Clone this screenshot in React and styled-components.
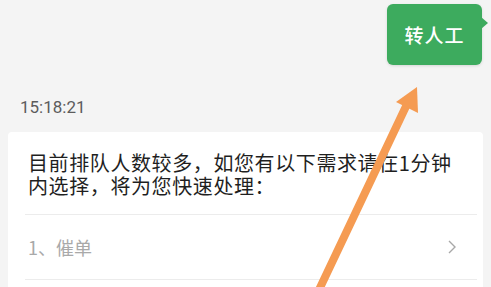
import React from "react";
import styled, { createGlobalStyle } from "styled-components";

const GlobalStyle = createGlobalStyle`
    html, body {
        margin: 0;
        padding: 0;
        background: #f4f4f4;
    }
    * {
        box-sizing: border-box;
    }
`;

const Page = styled.div`
    position: relative;
    width: 491px;
    height: 287px;
    overflow: hidden;
    background: #f4f4f4;
    padding: 4px 8px 0 8px;
    font-family: "Noto Sans CJK SC", "Noto Sans", sans-serif;
`;

const TopBar = styled.div`
    display: flex;
    justify-content: flex-end;
    padding-right: 1px;
`;

const TransferButton = styled.div`
    position: relative;
    width: 95px;
    height: 61px;
    border-radius: 6px;
    background: #3dab5e;
    color: #ffffff;
    font-size: 19px;
    font-weight: 500;
    letter-spacing: 1px;
    display: flex;
    align-items: center;
    justify-content: center;
    box-shadow: 0 1px 3px rgba(0, 0, 0, 0.12);

    &::after {
        content: "";
        position: absolute;
        right: -6px;
        top: 13px;
        border-top: 6px solid transparent;
        border-bottom: 6px solid transparent;
        border-left: 7px solid #3dab5e;
    }
`;

const Time = styled.div`
    margin-top: 32px;
    padding-left: 12px;
    font-family: Roboto, "Noto Sans", sans-serif;
    font-size: 17px;
    line-height: 20px;
    color: #5c5c5c;
`;

const Card = styled.div`
    margin-top: 15px;
    background: #ffffff;
    border-radius: 4px;
    padding-top: 19px;
    height: 200px;
`;

const Notice = styled.p`
    margin: 0;
    padding: 0 20px 0 20px;
    font-size: 20px;
    line-height: 23px;
    letter-spacing: 0.6px;
    color: #1f1f1f;
`;

const OptionList = styled.div`
    margin: 17px 6px 0 17px;
    border-top: 1px solid #ececec;
`;

const OptionRow = styled.div`
    display: flex;
    align-items: center;
    justify-content: space-between;
    height: 65px;
    padding: 0 20px 0 3px;
    border-bottom: 1px solid #ececec;
    font-size: 18px;
    color: #a9a9a9;
`;

const Chevron = styled.svg`
    width: 10px;
    height: 16px;
`;

const ArrowLayer = styled.svg`
    position: absolute;
    left: 0;
    top: 0;
    width: 491px;
    height: 287px;
    pointer-events: none;
`;

const options = ["1、催单"];

export default function App() {
    return (
        <>
            <GlobalStyle />
            <Page>
                <TopBar>
                    <TransferButton>转人工</TransferButton>
                </TopBar>
                <Time>15:18:21</Time>
                <Card>
                    <Notice>
                        目前排队人数较多，如您有以下需求请在1分钟
                        <br />
                        内选择，将为您快速处理：
                    </Notice>
                    <OptionList>
                        {options.map((item, index) => (
                            <OptionRow key={index}>
                                <span>{item}</span>
                                <Chevron viewBox="0 0 10 16">
                                    <path d="M2 2 L8 8 L2 14" fill="none" stroke="#a8a8a8" strokeWidth="1.4" />
                                </Chevron>
                            </OptionRow>
                        ))}
                    </OptionList>
                </Card>
                <ArrowLayer viewBox="0 0 491 287">
                    <line x1="318" y1="292" x2="409" y2="100" stroke="#f59b52" strokeWidth="8" strokeLinecap="round" />
                    <polygon points="417,87 396,102 418,113" fill="#f59b52" />
                </ArrowLayer>
            </Page>
        </>
    );
}
